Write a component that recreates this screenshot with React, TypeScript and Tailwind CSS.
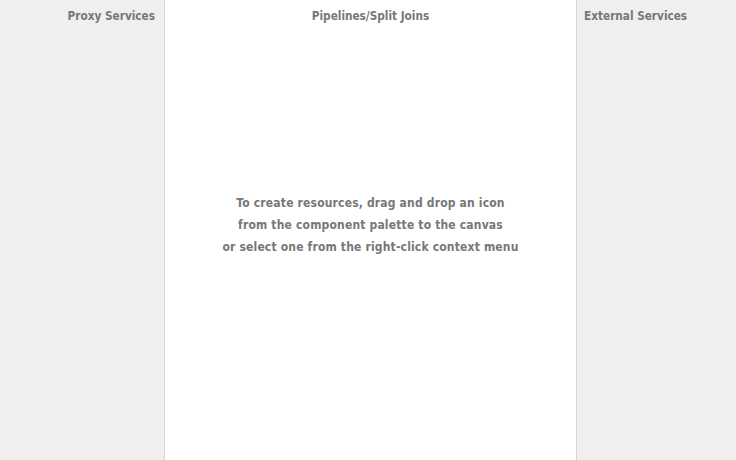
export default function App() {
  return (
    <div className="flex h-[460px] w-[736px] overflow-hidden bg-[#efefef] font-['DejaVu_Sans_Condensed','DejaVu_Sans',sans-serif] text-[12px] font-bold text-[#777777]">
      {/* Proxy column */}
      <div className="flex w-[164px] shrink-0 flex-col">
        <div className="pr-[9px] pt-[8px] text-right text-[11.7px] leading-[17px]">Proxy Services</div>
      </div>

      {/* Canvas column */}
      <div className="flex w-[413px] shrink-0 flex-col border-x border-[#d6d6d6] bg-white">
        <div className="pt-[8px] text-center text-[11.7px] leading-[17px]">Pipelines/Split Joins</div>
        <div className="mt-[167px] flex flex-col items-center leading-[22px] tracking-[0.17px]">
          <span>To create resources, drag and drop an icon</span>
          <span>from the component palette to the canvas</span>
          <span>or select one from the right-click context menu</span>
        </div>
      </div>

      {/* External column */}
      <div className="flex flex-1 flex-col">
        <div className="pl-[7px] pt-[8px] text-[11.7px] leading-[17px]">External Services</div>
      </div>
    </div>
  );
}
